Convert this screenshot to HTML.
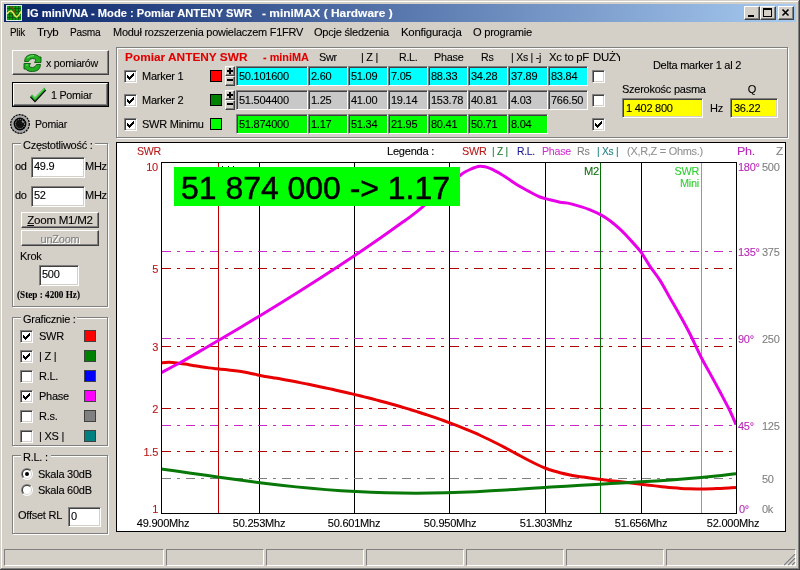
<!DOCTYPE html><html><head><meta charset="utf-8"><style>
html,body{margin:0;padding:0;width:800px;height:570px;overflow:hidden;background:#d4d0c8;font-family:'Liberation Sans',sans-serif;}
div{-webkit-text-stroke:0.1px currentColor;}
</style></head><body><div style="position:absolute;left:0;top:0;width:800px;height:570px;will-change:transform">
<div style="position:absolute;left:0px;top:0px;width:800px;height:570px;background:#d4d0c8;"></div>
<div style="position:absolute;left:1px;top:1px;width:797px;height:1px;background:#fff;"></div>
<div style="position:absolute;left:1px;top:1px;width:1px;height:567px;background:#fff;"></div>
<div style="position:absolute;left:0px;top:569px;width:800px;height:1px;background:#404040;"></div>
<div style="position:absolute;left:799px;top:0px;width:1px;height:570px;background:#404040;"></div>
<div style="position:absolute;left:1px;top:568px;width:798px;height:1px;background:#808080;"></div>
<div style="position:absolute;left:798px;top:1px;width:1px;height:568px;background:#808080;"></div>
<div style="position:absolute;left:4px;top:4px;width:792px;height:18px;background:linear-gradient(to right,#0a246a,#a6caf0);"></div>
<svg style="position:absolute;left:6px;top:5px" width="16" height="16">
<rect x="0" y="0" width="16" height="16" fill="#d8f0e8"/>
<rect x="1" y="1" width="14" height="14" fill="#109a10"/>
<g stroke="#0a4a0a" stroke-width="0.9" opacity="0.8">
<path d="M1 3.5H15M1 6.5H15M1 9.5H15M1 12.5H15M3.5 1V15M6.5 1V15M9.5 1V15M12.5 1V15"/></g>
<path d="M4 1.5 C6 2 7 3 8 5 C9 7 9.5 10 10 11" stroke="#705010" stroke-width="1.4" fill="none"/>
<path d="M1 9 C3 6 5 5 6.5 7 C8 9 9 12 10.5 12 C12 12 13.5 9 15 6.5" stroke="#e8e860" stroke-width="1.5" fill="none"/>
</svg>
<div style="position:absolute;left:27px;top:8px;font:bold 11px/11px 'Liberation Sans',sans-serif;letter-spacing:0px;color:#fff;white-space:nowrap;transform:scaleX(1.0132);transform-origin:left top;">IG miniVNA - Mode : Pomiar ANTENY SWR</div>
<div style="position:absolute;left:262.4px;top:8px;font:bold 11px/11px 'Liberation Sans',sans-serif;letter-spacing:0px;color:#fff;white-space:nowrap;transform:scaleX(1.0847);transform-origin:left top;">- miniMAX ( Hardware )</div>
<div style="position:absolute;left:744px;top:6px;width:14px;height:12px;background:#d4d0c8;border-top:1px solid #fff;border-left:1px solid #fff;border-right:1px solid #404040;border-bottom:1px solid #404040;box-shadow:inset -1px -1px 0 #808080;"></div>
<div style="position:absolute;left:748px;top:15px;width:6px;height:2px;background:#000;"></div>
<div style="position:absolute;left:760px;top:6px;width:14px;height:12px;background:#d4d0c8;border-top:1px solid #fff;border-left:1px solid #fff;border-right:1px solid #404040;border-bottom:1px solid #404040;box-shadow:inset -1px -1px 0 #808080;"></div>
<div style="position:absolute;left:763px;top:8px;width:7px;height:6px;border:1px solid #000;border-top-width:2px"></div>
<div style="position:absolute;left:778px;top:6px;width:14px;height:12px;background:#d4d0c8;border-top:1px solid #fff;border-left:1px solid #fff;border-right:1px solid #404040;border-bottom:1px solid #404040;box-shadow:inset -1px -1px 0 #808080;"></div>
<svg style="position:absolute;left:778px;top:6px" width="16" height="14"><path d="M4.5 3.5L10.5 9.5M10.5 3.5L4.5 9.5" stroke="#000" stroke-width="1.6"/></svg>
<div style="position:absolute;left:10px;top:27px;font:normal 11px/11px 'Liberation Sans',sans-serif;letter-spacing:-0.25px;color:#000;white-space:nowrap;transform:scaleX(0.8964);transform-origin:left top;">Plik</div>
<div style="position:absolute;left:37px;top:27px;font:normal 11px/11px 'Liberation Sans',sans-serif;letter-spacing:-0.25px;color:#000;white-space:nowrap;transform:scaleX(1.0440);transform-origin:left top;">Tryb</div>
<div style="position:absolute;left:70px;top:27px;font:normal 11px/11px 'Liberation Sans',sans-serif;letter-spacing:-0.25px;color:#000;white-space:nowrap;transform:scaleX(0.9242);transform-origin:left top;">Pasma</div>
<div style="position:absolute;left:113px;top:27px;font:normal 11px/11px 'Liberation Sans',sans-serif;letter-spacing:-0.25px;color:#000;white-space:nowrap;transform:scaleX(0.9962);transform-origin:left top;">Moduł rozszerzenia powielaczem F1FRV</div>
<div style="position:absolute;left:314px;top:27px;font:normal 11px/11px 'Liberation Sans',sans-serif;letter-spacing:-0.25px;color:#000;white-space:nowrap;transform:scaleX(1.0063);transform-origin:left top;">Opcje śledzenia</div>
<div style="position:absolute;left:401px;top:27px;font:normal 11px/11px 'Liberation Sans',sans-serif;letter-spacing:-0.25px;color:#000;white-space:nowrap;transform:scaleX(1.0403);transform-origin:left top;">Konfiguracja</div>
<div style="position:absolute;left:473px;top:27px;font:normal 11px/11px 'Liberation Sans',sans-serif;letter-spacing:-0.25px;color:#000;white-space:nowrap;transform:scaleX(1.0104);transform-origin:left top;">O programie</div>
<div style="position:absolute;left:12px;top:50px;width:95px;height:23px;background:#d4d0c8;border-top:1px solid #fff;border-left:1px solid #fff;border-right:1px solid #404040;border-bottom:1px solid #404040;box-shadow:inset -1px -1px 0 #808080;"></div>
<svg style="position:absolute;left:0;top:0" width="60" height="80">
<g fill="#22b022" stroke="#0a5a0a" stroke-width="0.9" stroke-linejoin="round">
<path d="M24.5 61.5 Q25 54.5 32.5 54.5 Q38 54.5 39 57 L41 57 L41 62.5 L34.5 62.5 L36 60 Q35 58.5 32.5 58.5 Q29.5 58.5 28.5 61.5 Z"/>
<path d="M40.5 64.5 Q40 71.5 32.5 71.5 Q27 71.5 26 69 L24 69 L24 63.5 L30.5 63.5 L29 66 Q30 67.5 32.5 67.5 Q35.5 67.5 36.5 64.5 Z"/>
</g>
<path d="M27 58 Q30 55.5 34 55.6" stroke="#7ee07e" stroke-width="1" fill="none"/>
<path d="M26 65 L28 65" stroke="#7ee07e" stroke-width="1" fill="none"/>
</svg>
<div style="position:absolute;left:46px;top:58px;font:normal 11px/11px 'Liberation Sans',sans-serif;letter-spacing:-0.25px;color:#000;white-space:nowrap;transform:scaleX(0.9674);transform-origin:left top;">x pomiarów</div>
<div style="position:absolute;left:12px;top:82px;width:97px;height:25px;background:#000;"></div>
<div style="position:absolute;left:13px;top:83px;width:93px;height:21px;background:#d4d0c8;border-top:1px solid #fff;border-left:1px solid #fff;border-right:1px solid #404040;border-bottom:1px solid #404040;box-shadow:inset -1px -1px 0 #808080;"></div>
<svg style="position:absolute;left:0;top:0" width="60" height="110">
<path d="M30.2 96.6 L35 101.6 L45.8 90.2 L44.4 87.6 L35 97.3 L32.2 94.4 Z" fill="#1eaa1e"/>
<path d="M30.4 96.8 L35 101.6 L45.8 90.2" stroke="#000" stroke-width="1.1" fill="none"/>
<path d="M32.5 95.5 L35 98.5 L44 89" stroke="#70e070" stroke-width="1" fill="none"/>
</svg>
<div style="position:absolute;left:51px;top:90px;font:normal 11px/11px 'Liberation Sans',sans-serif;letter-spacing:-0.25px;color:#000;white-space:nowrap;transform:scaleX(0.9755);transform-origin:left top;">1 Pomiar</div>
<svg style="position:absolute;left:10px;top:114px" width="20" height="20">
<circle cx="10" cy="10" r="9.3" fill="#a8a8a8" stroke="#000" stroke-width="1.2" stroke-dasharray="2.2 0.8"/>
<circle cx="10" cy="10" r="6.4" fill="#000"/>
<circle cx="10" cy="10" r="4.6" fill="#101010" stroke="#a0a0a0" stroke-width="0.9" stroke-dasharray="1.2 0.9"/>
<ellipse cx="12.8" cy="7.8" rx="1.3" ry="0.8" fill="#909090" transform="rotate(40 12.8 7.8)"/>
</svg>
<div style="position:absolute;left:35px;top:119px;font:normal 11px/11px 'Liberation Sans',sans-serif;letter-spacing:-0.25px;color:#000;white-space:nowrap;transform:scaleX(0.9597);transform-origin:left top;">Pomiar</div>
<div style="position:absolute;left:117px;top:48px;width:670px;height:89px;border:1px solid #fff;"></div>
<div style="position:absolute;left:116px;top:47px;width:670px;height:89px;border:1px solid #808080;"></div>
<div style="position:absolute;left:125px;top:52px;font:bold 11px/11px 'Liberation Sans',sans-serif;letter-spacing:0px;color:#e00000;white-space:nowrap;transform:scaleX(1.0775);transform-origin:left top;">Pomiar ANTENY SWR</div>
<div style="position:absolute;left:262.5px;top:52px;font:bold 11px/11px 'Liberation Sans',sans-serif;letter-spacing:0px;color:#e00000;white-space:nowrap;transform:scaleX(0.9902);transform-origin:left top;">- miniMA</div>
<div style="position:absolute;left:318.5px;top:52px;font:normal 11px/11px 'Liberation Sans',sans-serif;letter-spacing:-0.25px;color:#000;white-space:nowrap;transform:scaleX(0.9888);transform-origin:left top;">Swr</div>
<div style="position:absolute;left:360.5px;top:52px;font:normal 11px/11px 'Liberation Sans',sans-serif;letter-spacing:-0.25px;color:#000;white-space:nowrap;transform:scaleX(0.9828);transform-origin:left top;">| Z |</div>
<div style="position:absolute;left:398.5px;top:52px;font:normal 11px/11px 'Liberation Sans',sans-serif;letter-spacing:-0.25px;color:#000;white-space:nowrap;transform:scaleX(0.9642);transform-origin:left top;">R.L.</div>
<div style="position:absolute;left:433.5px;top:52px;font:normal 11px/11px 'Liberation Sans',sans-serif;letter-spacing:-0.25px;color:#000;white-space:nowrap;transform:scaleX(0.9849);transform-origin:left top;">Phase</div>
<div style="position:absolute;left:480.5px;top:52px;font:normal 11px/11px 'Liberation Sans',sans-serif;letter-spacing:-0.25px;color:#000;white-space:nowrap;transform:scaleX(0.9650);transform-origin:left top;">Rs</div>
<div style="position:absolute;left:511px;top:52px;font:normal 11px/11px 'Liberation Sans',sans-serif;letter-spacing:-0.25px;color:#000;white-space:nowrap;transform:scaleX(0.9500);transform-origin:left top;">| Xs | -j</div>
<div style="position:absolute;left:548.5px;top:52px;font:normal 11px/11px 'Liberation Sans',sans-serif;letter-spacing:-0.25px;color:#000;white-space:nowrap;transform:scaleX(1.0265);transform-origin:left top;">Xc to pF</div>
<div style="position:absolute;left:590px;top:48px;width:30px;height:16px;overflow:hidden">
<div style="position:absolute;left:2.5px;top:4px;font:normal 11px/11px 'Liberation Sans',sans-serif;letter-spacing:-0.25px;color:#000;white-space:nowrap;transform:scaleX(1.0362);transform-origin:left top;">DUŻY</div>
</div>
<div style="position:absolute;left:124px;top:70px;width:11px;height:11px;background:#fff;border-top:1px solid #808080;border-left:1px solid #808080;border-right:1px solid #fff;border-bottom:1px solid #fff;box-shadow:inset 1px 1px 0 #404040, inset -1px -1px 0 #d4d0c8;"></div>
<svg style="position:absolute;left:127px;top:73px" width="7" height="7" shape-rendering="crispEdges"><path d="M0 2h1v3h-1zM1 3h1v3h-1zM2 4h1v3h-1zM3 3h1v3h-1zM4 2h1v3h-1zM5 1h1v3h-1zM6 0h1v3h-1z" fill="#000"/></svg>
<div style="position:absolute;left:142px;top:71px;font:normal 11px/11px 'Liberation Sans',sans-serif;letter-spacing:-0.25px;color:#000;white-space:nowrap;">Marker 1</div>
<div style="position:absolute;left:210px;top:70px;width:10px;height:10px;background:#ff0000;border:1px solid #000;"></div>
<div style="position:absolute;left:225px;top:66px;width:8px;height:8px;background:#d4d0c8;border-top:1px solid #fff;border-left:1px solid #fff;border-right:1px solid #404040;border-bottom:1px solid #404040;box-shadow:inset -1px -1px 0 #808080;"></div>
<div style="position:absolute;left:225px;top:76px;width:8px;height:8px;background:#d4d0c8;border-top:1px solid #fff;border-left:1px solid #fff;border-right:1px solid #404040;border-bottom:1px solid #404040;box-shadow:inset -1px -1px 0 #808080;"></div>
<svg style="position:absolute;left:227px;top:68px" width="6" height="15" shape-rendering="crispEdges"><path d="M0 2h6v2h-6zM2 0h2v6h-2zM0 11h6v2h-6z" fill="#000"/></svg>
<div style="position:absolute;left:236px;top:66px;width:70px;height:18px;background:#00ffff;border-top:1px solid #808080;border-left:1px solid #808080;border-right:1px solid #fff;border-bottom:1px solid #fff;box-shadow:inset 1px 1px 0 #404040, inset -1px -1px 0 #00ffff;"></div>
<div style="position:absolute;left:239px;top:71px;font:normal 11px/11px 'Liberation Sans',sans-serif;letter-spacing:-0.25px;color:#000;white-space:nowrap;">50.101600</div>
<div style="position:absolute;left:308px;top:66px;width:38px;height:18px;background:#00ffff;border-top:1px solid #808080;border-left:1px solid #808080;border-right:1px solid #fff;border-bottom:1px solid #fff;box-shadow:inset 1px 1px 0 #404040, inset -1px -1px 0 #00ffff;"></div>
<div style="position:absolute;left:311px;top:71px;font:normal 11px/11px 'Liberation Sans',sans-serif;letter-spacing:-0.25px;color:#000;white-space:nowrap;">2.60</div>
<div style="position:absolute;left:348px;top:66px;width:38px;height:18px;background:#00ffff;border-top:1px solid #808080;border-left:1px solid #808080;border-right:1px solid #fff;border-bottom:1px solid #fff;box-shadow:inset 1px 1px 0 #404040, inset -1px -1px 0 #00ffff;"></div>
<div style="position:absolute;left:351px;top:71px;font:normal 11px/11px 'Liberation Sans',sans-serif;letter-spacing:-0.25px;color:#000;white-space:nowrap;">51.09</div>
<div style="position:absolute;left:388px;top:66px;width:38px;height:18px;background:#00ffff;border-top:1px solid #808080;border-left:1px solid #808080;border-right:1px solid #fff;border-bottom:1px solid #fff;box-shadow:inset 1px 1px 0 #404040, inset -1px -1px 0 #00ffff;"></div>
<div style="position:absolute;left:391px;top:71px;font:normal 11px/11px 'Liberation Sans',sans-serif;letter-spacing:-0.25px;color:#000;white-space:nowrap;">7.05</div>
<div style="position:absolute;left:428px;top:66px;width:38px;height:18px;background:#00ffff;border-top:1px solid #808080;border-left:1px solid #808080;border-right:1px solid #fff;border-bottom:1px solid #fff;box-shadow:inset 1px 1px 0 #404040, inset -1px -1px 0 #00ffff;"></div>
<div style="position:absolute;left:431px;top:71px;font:normal 11px/11px 'Liberation Sans',sans-serif;letter-spacing:-0.25px;color:#000;white-space:nowrap;">88.33</div>
<div style="position:absolute;left:468px;top:66px;width:38px;height:18px;background:#00ffff;border-top:1px solid #808080;border-left:1px solid #808080;border-right:1px solid #fff;border-bottom:1px solid #fff;box-shadow:inset 1px 1px 0 #404040, inset -1px -1px 0 #00ffff;"></div>
<div style="position:absolute;left:471px;top:71px;font:normal 11px/11px 'Liberation Sans',sans-serif;letter-spacing:-0.25px;color:#000;white-space:nowrap;">34.28</div>
<div style="position:absolute;left:508px;top:66px;width:38px;height:18px;background:#00ffff;border-top:1px solid #808080;border-left:1px solid #808080;border-right:1px solid #fff;border-bottom:1px solid #fff;box-shadow:inset 1px 1px 0 #404040, inset -1px -1px 0 #00ffff;"></div>
<div style="position:absolute;left:511px;top:71px;font:normal 11px/11px 'Liberation Sans',sans-serif;letter-spacing:-0.25px;color:#000;white-space:nowrap;">37.89</div>
<div style="position:absolute;left:548px;top:66px;width:38px;height:18px;background:#00ffff;border-top:1px solid #808080;border-left:1px solid #808080;border-right:1px solid #fff;border-bottom:1px solid #fff;box-shadow:inset 1px 1px 0 #404040, inset -1px -1px 0 #00ffff;"></div>
<div style="position:absolute;left:551px;top:71px;font:normal 11px/11px 'Liberation Sans',sans-serif;letter-spacing:-0.25px;color:#000;white-space:nowrap;">83.84</div>
<div style="position:absolute;left:592px;top:70px;width:11px;height:11px;background:#fff;border-top:1px solid #808080;border-left:1px solid #808080;border-right:1px solid #fff;border-bottom:1px solid #fff;box-shadow:inset 1px 1px 0 #404040, inset -1px -1px 0 #d4d0c8;"></div>
<div style="position:absolute;left:124px;top:94px;width:11px;height:11px;background:#fff;border-top:1px solid #808080;border-left:1px solid #808080;border-right:1px solid #fff;border-bottom:1px solid #fff;box-shadow:inset 1px 1px 0 #404040, inset -1px -1px 0 #d4d0c8;"></div>
<svg style="position:absolute;left:127px;top:97px" width="7" height="7" shape-rendering="crispEdges"><path d="M0 2h1v3h-1zM1 3h1v3h-1zM2 4h1v3h-1zM3 3h1v3h-1zM4 2h1v3h-1zM5 1h1v3h-1zM6 0h1v3h-1z" fill="#000"/></svg>
<div style="position:absolute;left:142px;top:95px;font:normal 11px/11px 'Liberation Sans',sans-serif;letter-spacing:-0.25px;color:#000;white-space:nowrap;">Marker 2</div>
<div style="position:absolute;left:210px;top:94px;width:10px;height:10px;background:#008000;border:1px solid #000;"></div>
<div style="position:absolute;left:225px;top:90px;width:8px;height:8px;background:#d4d0c8;border-top:1px solid #fff;border-left:1px solid #fff;border-right:1px solid #404040;border-bottom:1px solid #404040;box-shadow:inset -1px -1px 0 #808080;"></div>
<div style="position:absolute;left:225px;top:100px;width:8px;height:8px;background:#d4d0c8;border-top:1px solid #fff;border-left:1px solid #fff;border-right:1px solid #404040;border-bottom:1px solid #404040;box-shadow:inset -1px -1px 0 #808080;"></div>
<svg style="position:absolute;left:227px;top:92px" width="6" height="15" shape-rendering="crispEdges"><path d="M0 2h6v2h-6zM2 0h2v6h-2zM0 11h6v2h-6z" fill="#000"/></svg>
<div style="position:absolute;left:236px;top:90px;width:70px;height:18px;background:#c8c8c8;border-top:1px solid #808080;border-left:1px solid #808080;border-right:1px solid #fff;border-bottom:1px solid #fff;box-shadow:inset 1px 1px 0 #404040, inset -1px -1px 0 #c8c8c8;"></div>
<div style="position:absolute;left:239px;top:95px;font:normal 11px/11px 'Liberation Sans',sans-serif;letter-spacing:-0.25px;color:#000;white-space:nowrap;">51.504400</div>
<div style="position:absolute;left:308px;top:90px;width:38px;height:18px;background:#c8c8c8;border-top:1px solid #808080;border-left:1px solid #808080;border-right:1px solid #fff;border-bottom:1px solid #fff;box-shadow:inset 1px 1px 0 #404040, inset -1px -1px 0 #c8c8c8;"></div>
<div style="position:absolute;left:311px;top:95px;font:normal 11px/11px 'Liberation Sans',sans-serif;letter-spacing:-0.25px;color:#000;white-space:nowrap;">1.25</div>
<div style="position:absolute;left:348px;top:90px;width:38px;height:18px;background:#c8c8c8;border-top:1px solid #808080;border-left:1px solid #808080;border-right:1px solid #fff;border-bottom:1px solid #fff;box-shadow:inset 1px 1px 0 #404040, inset -1px -1px 0 #c8c8c8;"></div>
<div style="position:absolute;left:351px;top:95px;font:normal 11px/11px 'Liberation Sans',sans-serif;letter-spacing:-0.25px;color:#000;white-space:nowrap;">41.00</div>
<div style="position:absolute;left:388px;top:90px;width:38px;height:18px;background:#c8c8c8;border-top:1px solid #808080;border-left:1px solid #808080;border-right:1px solid #fff;border-bottom:1px solid #fff;box-shadow:inset 1px 1px 0 #404040, inset -1px -1px 0 #c8c8c8;"></div>
<div style="position:absolute;left:391px;top:95px;font:normal 11px/11px 'Liberation Sans',sans-serif;letter-spacing:-0.25px;color:#000;white-space:nowrap;">19.14</div>
<div style="position:absolute;left:428px;top:90px;width:38px;height:18px;background:#c8c8c8;border-top:1px solid #808080;border-left:1px solid #808080;border-right:1px solid #fff;border-bottom:1px solid #fff;box-shadow:inset 1px 1px 0 #404040, inset -1px -1px 0 #c8c8c8;"></div>
<div style="position:absolute;left:431px;top:95px;font:normal 11px/11px 'Liberation Sans',sans-serif;letter-spacing:-0.25px;color:#000;white-space:nowrap;">153.78</div>
<div style="position:absolute;left:468px;top:90px;width:38px;height:18px;background:#c8c8c8;border-top:1px solid #808080;border-left:1px solid #808080;border-right:1px solid #fff;border-bottom:1px solid #fff;box-shadow:inset 1px 1px 0 #404040, inset -1px -1px 0 #c8c8c8;"></div>
<div style="position:absolute;left:471px;top:95px;font:normal 11px/11px 'Liberation Sans',sans-serif;letter-spacing:-0.25px;color:#000;white-space:nowrap;">40.81</div>
<div style="position:absolute;left:508px;top:90px;width:38px;height:18px;background:#c8c8c8;border-top:1px solid #808080;border-left:1px solid #808080;border-right:1px solid #fff;border-bottom:1px solid #fff;box-shadow:inset 1px 1px 0 #404040, inset -1px -1px 0 #c8c8c8;"></div>
<div style="position:absolute;left:511px;top:95px;font:normal 11px/11px 'Liberation Sans',sans-serif;letter-spacing:-0.25px;color:#000;white-space:nowrap;">4.03</div>
<div style="position:absolute;left:548px;top:90px;width:38px;height:18px;background:#c8c8c8;border-top:1px solid #808080;border-left:1px solid #808080;border-right:1px solid #fff;border-bottom:1px solid #fff;box-shadow:inset 1px 1px 0 #404040, inset -1px -1px 0 #c8c8c8;"></div>
<div style="position:absolute;left:551px;top:95px;font:normal 11px/11px 'Liberation Sans',sans-serif;letter-spacing:-0.25px;color:#000;white-space:nowrap;">766.50</div>
<div style="position:absolute;left:592px;top:94px;width:11px;height:11px;background:#fff;border-top:1px solid #808080;border-left:1px solid #808080;border-right:1px solid #fff;border-bottom:1px solid #fff;box-shadow:inset 1px 1px 0 #404040, inset -1px -1px 0 #d4d0c8;"></div>
<div style="position:absolute;left:124px;top:118px;width:11px;height:11px;background:#fff;border-top:1px solid #808080;border-left:1px solid #808080;border-right:1px solid #fff;border-bottom:1px solid #fff;box-shadow:inset 1px 1px 0 #404040, inset -1px -1px 0 #d4d0c8;"></div>
<svg style="position:absolute;left:127px;top:121px" width="7" height="7" shape-rendering="crispEdges"><path d="M0 2h1v3h-1zM1 3h1v3h-1zM2 4h1v3h-1zM3 3h1v3h-1zM4 2h1v3h-1zM5 1h1v3h-1zM6 0h1v3h-1z" fill="#000"/></svg>
<div style="position:absolute;left:142px;top:119px;font:normal 11px/11px 'Liberation Sans',sans-serif;letter-spacing:-0.25px;color:#000;white-space:nowrap;">SWR Minimu</div>
<div style="position:absolute;left:210px;top:118px;width:10px;height:10px;background:#00ff00;border:1px solid #000;"></div>
<div style="position:absolute;left:236px;top:114px;width:70px;height:18px;background:#00ff00;border-top:1px solid #808080;border-left:1px solid #808080;border-right:1px solid #fff;border-bottom:1px solid #fff;box-shadow:inset 1px 1px 0 #404040, inset -1px -1px 0 #00ff00;"></div>
<div style="position:absolute;left:239px;top:119px;font:normal 11px/11px 'Liberation Sans',sans-serif;letter-spacing:-0.25px;color:#000;white-space:nowrap;">51.874000</div>
<div style="position:absolute;left:308px;top:114px;width:38px;height:18px;background:#00ff00;border-top:1px solid #808080;border-left:1px solid #808080;border-right:1px solid #fff;border-bottom:1px solid #fff;box-shadow:inset 1px 1px 0 #404040, inset -1px -1px 0 #00ff00;"></div>
<div style="position:absolute;left:311px;top:119px;font:normal 11px/11px 'Liberation Sans',sans-serif;letter-spacing:-0.25px;color:#000;white-space:nowrap;">1.17</div>
<div style="position:absolute;left:348px;top:114px;width:38px;height:18px;background:#00ff00;border-top:1px solid #808080;border-left:1px solid #808080;border-right:1px solid #fff;border-bottom:1px solid #fff;box-shadow:inset 1px 1px 0 #404040, inset -1px -1px 0 #00ff00;"></div>
<div style="position:absolute;left:351px;top:119px;font:normal 11px/11px 'Liberation Sans',sans-serif;letter-spacing:-0.25px;color:#000;white-space:nowrap;">51.34</div>
<div style="position:absolute;left:388px;top:114px;width:38px;height:18px;background:#00ff00;border-top:1px solid #808080;border-left:1px solid #808080;border-right:1px solid #fff;border-bottom:1px solid #fff;box-shadow:inset 1px 1px 0 #404040, inset -1px -1px 0 #00ff00;"></div>
<div style="position:absolute;left:391px;top:119px;font:normal 11px/11px 'Liberation Sans',sans-serif;letter-spacing:-0.25px;color:#000;white-space:nowrap;">21.95</div>
<div style="position:absolute;left:428px;top:114px;width:38px;height:18px;background:#00ff00;border-top:1px solid #808080;border-left:1px solid #808080;border-right:1px solid #fff;border-bottom:1px solid #fff;box-shadow:inset 1px 1px 0 #404040, inset -1px -1px 0 #00ff00;"></div>
<div style="position:absolute;left:431px;top:119px;font:normal 11px/11px 'Liberation Sans',sans-serif;letter-spacing:-0.25px;color:#000;white-space:nowrap;">80.41</div>
<div style="position:absolute;left:468px;top:114px;width:38px;height:18px;background:#00ff00;border-top:1px solid #808080;border-left:1px solid #808080;border-right:1px solid #fff;border-bottom:1px solid #fff;box-shadow:inset 1px 1px 0 #404040, inset -1px -1px 0 #00ff00;"></div>
<div style="position:absolute;left:471px;top:119px;font:normal 11px/11px 'Liberation Sans',sans-serif;letter-spacing:-0.25px;color:#000;white-space:nowrap;">50.71</div>
<div style="position:absolute;left:508px;top:114px;width:38px;height:18px;background:#00ff00;border-top:1px solid #808080;border-left:1px solid #808080;border-right:1px solid #fff;border-bottom:1px solid #fff;box-shadow:inset 1px 1px 0 #404040, inset -1px -1px 0 #00ff00;"></div>
<div style="position:absolute;left:511px;top:119px;font:normal 11px/11px 'Liberation Sans',sans-serif;letter-spacing:-0.25px;color:#000;white-space:nowrap;">8.04</div>
<div style="position:absolute;left:592px;top:118px;width:11px;height:11px;background:#fff;border-top:1px solid #808080;border-left:1px solid #808080;border-right:1px solid #fff;border-bottom:1px solid #fff;box-shadow:inset 1px 1px 0 #404040, inset -1px -1px 0 #d4d0c8;"></div>
<svg style="position:absolute;left:595px;top:121px" width="7" height="7" shape-rendering="crispEdges"><path d="M0 2h1v3h-1zM1 3h1v3h-1zM2 4h1v3h-1zM3 3h1v3h-1zM4 2h1v3h-1zM5 1h1v3h-1zM6 0h1v3h-1z" fill="#000"/></svg>
<div style="position:absolute;left:697px;top:60px;font:normal 11px/11px 'Liberation Sans',sans-serif;letter-spacing:-0.25px;color:#000;white-space:nowrap;transform:translateX(-50%) ;transform-origin:center top;">Delta marker 1 al 2</div>
<div style="position:absolute;left:622px;top:84px;font:normal 11px/11px 'Liberation Sans',sans-serif;letter-spacing:-0.25px;color:#000;white-space:nowrap;">Szerokośc pasma</div>
<div style="position:absolute;left:752px;top:84px;font:normal 11px/11px 'Liberation Sans',sans-serif;letter-spacing:-0.25px;color:#000;white-space:nowrap;transform:translateX(-50%) ;transform-origin:center top;">Q</div>
<div style="position:absolute;left:622px;top:98px;width:79px;height:18px;background:#ffff00;border-top:1px solid #808080;border-left:1px solid #808080;border-right:1px solid #fff;border-bottom:1px solid #fff;box-shadow:inset 1px 1px 0 #404040, inset -1px -1px 0 #d4d0c8;"></div>
<div style="position:absolute;left:626px;top:103px;font:normal 11px/11px 'Liberation Sans',sans-serif;letter-spacing:-0.25px;color:#000;white-space:nowrap;">1 402 800</div>
<div style="position:absolute;left:710px;top:103px;font:normal 11px/11px 'Liberation Sans',sans-serif;letter-spacing:-0.25px;color:#000;white-space:nowrap;">Hz</div>
<div style="position:absolute;left:730px;top:98px;width:46px;height:18px;background:#ffff00;border-top:1px solid #808080;border-left:1px solid #808080;border-right:1px solid #fff;border-bottom:1px solid #fff;box-shadow:inset 1px 1px 0 #404040, inset -1px -1px 0 #d4d0c8;"></div>
<div style="position:absolute;left:734px;top:103px;font:normal 11px/11px 'Liberation Sans',sans-serif;letter-spacing:-0.25px;color:#000;white-space:nowrap;">36.22</div>
<div style="position:absolute;left:13px;top:144px;width:94px;height:162px;border:1px solid #fff;"></div>
<div style="position:absolute;left:12px;top:143px;width:94px;height:162px;border:1px solid #808080;"></div>
<div style="position:absolute;left:21px;top:141px;width:74px;height:6px;background:#d4d0c8;"></div>
<div style="position:absolute;left:23px;top:140px;font:normal 11px/11px 'Liberation Sans',sans-serif;letter-spacing:-0.25px;color:#000;white-space:nowrap;">Częstotliwość :</div>
<div style="position:absolute;left:15px;top:161px;font:normal 11px/11px 'Liberation Sans',sans-serif;letter-spacing:-0.25px;color:#000;white-space:nowrap;">od</div>
<div style="position:absolute;left:31px;top:157px;width:52px;height:19px;background:#fff;border-top:1px solid #808080;border-left:1px solid #808080;border-right:1px solid #fff;border-bottom:1px solid #fff;box-shadow:inset 1px 1px 0 #404040, inset -1px -1px 0 #d4d0c8;"></div>
<div style="position:absolute;left:34px;top:161px;font:normal 11px/11px 'Liberation Sans',sans-serif;letter-spacing:-0.25px;color:#000;white-space:nowrap;">49.9</div>
<div style="position:absolute;left:85px;top:161px;font:normal 11px/11px 'Liberation Sans',sans-serif;letter-spacing:-0.25px;color:#000;white-space:nowrap;">MHz</div>
<div style="position:absolute;left:15px;top:190px;font:normal 11px/11px 'Liberation Sans',sans-serif;letter-spacing:-0.25px;color:#000;white-space:nowrap;">do</div>
<div style="position:absolute;left:31px;top:186px;width:52px;height:19px;background:#fff;border-top:1px solid #808080;border-left:1px solid #808080;border-right:1px solid #fff;border-bottom:1px solid #fff;box-shadow:inset 1px 1px 0 #404040, inset -1px -1px 0 #d4d0c8;"></div>
<div style="position:absolute;left:34px;top:190px;font:normal 11px/11px 'Liberation Sans',sans-serif;letter-spacing:-0.25px;color:#000;white-space:nowrap;">52</div>
<div style="position:absolute;left:85px;top:190px;font:normal 11px/11px 'Liberation Sans',sans-serif;letter-spacing:-0.25px;color:#000;white-space:nowrap;">MHz</div>
<div style="position:absolute;left:21px;top:212px;width:76px;height:14px;background:#d4d0c8;border-top:1px solid #fff;border-left:1px solid #fff;border-right:1px solid #404040;border-bottom:1px solid #404040;box-shadow:inset -1px -1px 0 #808080;"></div>
<div style="position:absolute;left:60px;top:215px;font:normal 11px/11px 'Liberation Sans',sans-serif;letter-spacing:-0.25px;color:#000;white-space:nowrap;transform:translateX(-50%) scaleX(1.0512);transform-origin:center top;"><u>Z</u>oom M1/M2</div>
<div style="position:absolute;left:21px;top:230px;width:76px;height:14px;background:#d4d0c8;border-top:1px solid #fff;border-left:1px solid #fff;border-right:1px solid #404040;border-bottom:1px solid #404040;box-shadow:inset -1px -1px 0 #808080;"></div>
<div style="position:absolute;left:61px;top:235px;font:normal 11px/11px 'Liberation Sans',sans-serif;letter-spacing:-0.25px;color:#fff;white-space:nowrap;transform:translateX(-50%) ;transform-origin:center top;">unZoom</div>
<div style="position:absolute;left:60px;top:234px;font:normal 11px/11px 'Liberation Sans',sans-serif;letter-spacing:-0.25px;color:#808080;white-space:nowrap;transform:translateX(-50%) ;transform-origin:center top;">unZoom</div>
<div style="position:absolute;left:20px;top:251px;font:normal 11px/11px 'Liberation Sans',sans-serif;letter-spacing:-0.25px;color:#000;white-space:nowrap;">Krok</div>
<div style="position:absolute;left:39px;top:265px;width:38px;height:19px;background:#fff;border-top:1px solid #808080;border-left:1px solid #808080;border-right:1px solid #fff;border-bottom:1px solid #fff;box-shadow:inset 1px 1px 0 #404040, inset -1px -1px 0 #d4d0c8;"></div>
<div style="position:absolute;left:42px;top:269px;font:normal 11px/11px 'Liberation Sans',sans-serif;letter-spacing:-0.25px;color:#000;white-space:nowrap;">500</div>
<div style="position:absolute;left:17px;top:290px;font:bold 10px/10px 'Liberation Serif',serif;letter-spacing:0px;color:#000;white-space:nowrap;transform:scaleX(0.9182);transform-origin:left top;">(Step : 4200 Hz)</div>
<div style="position:absolute;left:13px;top:318px;width:94px;height:127px;border:1px solid #fff;"></div>
<div style="position:absolute;left:12px;top:317px;width:94px;height:127px;border:1px solid #808080;"></div>
<div style="position:absolute;left:21px;top:315px;width:56px;height:6px;background:#d4d0c8;"></div>
<div style="position:absolute;left:23px;top:314px;font:normal 11px/11px 'Liberation Sans',sans-serif;letter-spacing:-0.25px;color:#000;white-space:nowrap;">Graficznie :</div>
<div style="position:absolute;left:20px;top:330px;width:11px;height:11px;background:#fff;border-top:1px solid #808080;border-left:1px solid #808080;border-right:1px solid #fff;border-bottom:1px solid #fff;box-shadow:inset 1px 1px 0 #404040, inset -1px -1px 0 #d4d0c8;"></div>
<svg style="position:absolute;left:23px;top:333px" width="7" height="7" shape-rendering="crispEdges"><path d="M0 2h1v3h-1zM1 3h1v3h-1zM2 4h1v3h-1zM3 3h1v3h-1zM4 2h1v3h-1zM5 1h1v3h-1zM6 0h1v3h-1z" fill="#000"/></svg>
<div style="position:absolute;left:39px;top:331px;font:normal 11px/11px 'Liberation Sans',sans-serif;letter-spacing:-0.25px;color:#000;white-space:nowrap;">SWR</div>
<div style="position:absolute;left:84px;top:330px;width:10px;height:10px;background:#ff0000;border:1px solid #404040;"></div>
<div style="position:absolute;left:20px;top:350px;width:11px;height:11px;background:#fff;border-top:1px solid #808080;border-left:1px solid #808080;border-right:1px solid #fff;border-bottom:1px solid #fff;box-shadow:inset 1px 1px 0 #404040, inset -1px -1px 0 #d4d0c8;"></div>
<svg style="position:absolute;left:23px;top:353px" width="7" height="7" shape-rendering="crispEdges"><path d="M0 2h1v3h-1zM1 3h1v3h-1zM2 4h1v3h-1zM3 3h1v3h-1zM4 2h1v3h-1zM5 1h1v3h-1zM6 0h1v3h-1z" fill="#000"/></svg>
<div style="position:absolute;left:39px;top:351px;font:normal 11px/11px 'Liberation Sans',sans-serif;letter-spacing:-0.25px;color:#000;white-space:nowrap;">| Z |</div>
<div style="position:absolute;left:84px;top:350px;width:10px;height:10px;background:#008000;border:1px solid #404040;"></div>
<div style="position:absolute;left:20px;top:370px;width:11px;height:11px;background:#fff;border-top:1px solid #808080;border-left:1px solid #808080;border-right:1px solid #fff;border-bottom:1px solid #fff;box-shadow:inset 1px 1px 0 #404040, inset -1px -1px 0 #d4d0c8;"></div>
<div style="position:absolute;left:39px;top:371px;font:normal 11px/11px 'Liberation Sans',sans-serif;letter-spacing:-0.25px;color:#000;white-space:nowrap;">R.L.</div>
<div style="position:absolute;left:84px;top:370px;width:10px;height:10px;background:#0000ff;border:1px solid #404040;"></div>
<div style="position:absolute;left:20px;top:390px;width:11px;height:11px;background:#fff;border-top:1px solid #808080;border-left:1px solid #808080;border-right:1px solid #fff;border-bottom:1px solid #fff;box-shadow:inset 1px 1px 0 #404040, inset -1px -1px 0 #d4d0c8;"></div>
<svg style="position:absolute;left:23px;top:393px" width="7" height="7" shape-rendering="crispEdges"><path d="M0 2h1v3h-1zM1 3h1v3h-1zM2 4h1v3h-1zM3 3h1v3h-1zM4 2h1v3h-1zM5 1h1v3h-1zM6 0h1v3h-1z" fill="#000"/></svg>
<div style="position:absolute;left:39px;top:391px;font:normal 11px/11px 'Liberation Sans',sans-serif;letter-spacing:-0.25px;color:#000;white-space:nowrap;">Phase</div>
<div style="position:absolute;left:84px;top:390px;width:10px;height:10px;background:#ff00ff;border:1px solid #404040;"></div>
<div style="position:absolute;left:20px;top:410px;width:11px;height:11px;background:#fff;border-top:1px solid #808080;border-left:1px solid #808080;border-right:1px solid #fff;border-bottom:1px solid #fff;box-shadow:inset 1px 1px 0 #404040, inset -1px -1px 0 #d4d0c8;"></div>
<div style="position:absolute;left:39px;top:411px;font:normal 11px/11px 'Liberation Sans',sans-serif;letter-spacing:-0.25px;color:#000;white-space:nowrap;">R.s.</div>
<div style="position:absolute;left:84px;top:410px;width:10px;height:10px;background:#808080;border:1px solid #404040;"></div>
<div style="position:absolute;left:20px;top:430px;width:11px;height:11px;background:#fff;border-top:1px solid #808080;border-left:1px solid #808080;border-right:1px solid #fff;border-bottom:1px solid #fff;box-shadow:inset 1px 1px 0 #404040, inset -1px -1px 0 #d4d0c8;"></div>
<div style="position:absolute;left:39px;top:431px;font:normal 11px/11px 'Liberation Sans',sans-serif;letter-spacing:-0.25px;color:#000;white-space:nowrap;">| XS |</div>
<div style="position:absolute;left:84px;top:430px;width:10px;height:10px;background:#008080;border:1px solid #404040;"></div>
<div style="position:absolute;left:13px;top:456px;width:94px;height:77px;border:1px solid #fff;"></div>
<div style="position:absolute;left:12px;top:455px;width:94px;height:77px;border:1px solid #808080;"></div>
<div style="position:absolute;left:21px;top:453px;width:30px;height:6px;background:#d4d0c8;"></div>
<div style="position:absolute;left:23px;top:452px;font:normal 11px/11px 'Liberation Sans',sans-serif;letter-spacing:-0.25px;color:#000;white-space:nowrap;">R.L. :</div>
<svg style="position:absolute;left:21px;top:468px" width="12" height="12">
<defs><clipPath id="tl21468"><path d="M0 0H12L0 12Z"/></clipPath><clipPath id="br21468"><path d="M12 0V12H0Z"/></clipPath></defs>
<circle cx="6" cy="6" r="6" fill="#808080" clip-path="url(#tl21468)"/>
<circle cx="6" cy="6" r="6" fill="#fff" clip-path="url(#br21468)"/>
<circle cx="6" cy="6" r="5" fill="#404040" clip-path="url(#tl21468)"/>
<circle cx="6" cy="6" r="5" fill="#d4d0c8" clip-path="url(#br21468)"/>
<circle cx="6" cy="6" r="4" fill="#fff"/>
<circle cx="6" cy="6" r="2" fill="#000"/>
</svg>
<div style="position:absolute;left:38px;top:469px;font:normal 11px/11px 'Liberation Sans',sans-serif;letter-spacing:-0.25px;color:#000;white-space:nowrap;">Skala 30dB</div>
<svg style="position:absolute;left:21px;top:484px" width="12" height="12">
<defs><clipPath id="tl21484"><path d="M0 0H12L0 12Z"/></clipPath><clipPath id="br21484"><path d="M12 0V12H0Z"/></clipPath></defs>
<circle cx="6" cy="6" r="6" fill="#808080" clip-path="url(#tl21484)"/>
<circle cx="6" cy="6" r="6" fill="#fff" clip-path="url(#br21484)"/>
<circle cx="6" cy="6" r="5" fill="#404040" clip-path="url(#tl21484)"/>
<circle cx="6" cy="6" r="5" fill="#d4d0c8" clip-path="url(#br21484)"/>
<circle cx="6" cy="6" r="4" fill="#fff"/>

</svg>
<div style="position:absolute;left:38px;top:485px;font:normal 11px/11px 'Liberation Sans',sans-serif;letter-spacing:-0.25px;color:#000;white-space:nowrap;">Skala 60dB</div>
<div style="position:absolute;left:18px;top:510px;font:normal 11px/11px 'Liberation Sans',sans-serif;letter-spacing:-0.25px;color:#000;white-space:nowrap;">Offset RL</div>
<div style="position:absolute;left:68px;top:507px;width:31px;height:18px;background:#fff;border-top:1px solid #808080;border-left:1px solid #808080;border-right:1px solid #fff;border-bottom:1px solid #fff;box-shadow:inset 1px 1px 0 #404040, inset -1px -1px 0 #d4d0c8;"></div>
<div style="position:absolute;left:71px;top:511px;font:normal 11px/11px 'Liberation Sans',sans-serif;letter-spacing:-0.25px;color:#000;white-space:nowrap;">0</div>
<div style="position:absolute;left:4px;top:549px;width:158px;height:15px;border-top:1px solid #808080;border-left:1px solid #808080;border-right:1px solid #fff;border-bottom:1px solid #fff;"></div>
<div style="position:absolute;left:166px;top:549px;width:96px;height:15px;border-top:1px solid #808080;border-left:1px solid #808080;border-right:1px solid #fff;border-bottom:1px solid #fff;"></div>
<div style="position:absolute;left:266px;top:549px;width:96px;height:15px;border-top:1px solid #808080;border-left:1px solid #808080;border-right:1px solid #fff;border-bottom:1px solid #fff;"></div>
<div style="position:absolute;left:366px;top:549px;width:96px;height:15px;border-top:1px solid #808080;border-left:1px solid #808080;border-right:1px solid #fff;border-bottom:1px solid #fff;"></div>
<div style="position:absolute;left:466px;top:549px;width:96px;height:15px;border-top:1px solid #808080;border-left:1px solid #808080;border-right:1px solid #fff;border-bottom:1px solid #fff;"></div>
<div style="position:absolute;left:566px;top:549px;width:96px;height:15px;border-top:1px solid #808080;border-left:1px solid #808080;border-right:1px solid #fff;border-bottom:1px solid #fff;"></div>
<div style="position:absolute;left:666px;top:549px;width:128px;height:15px;border-top:1px solid #808080;border-left:1px solid #808080;border-right:1px solid #fff;border-bottom:1px solid #fff;"></div>
<svg style="position:absolute;left:782px;top:552px" width="14" height="14">
<path d="M13 1L1 13M13 5L5 13M13 9L9 13" stroke="#fff" stroke-width="1"/>
<path d="M13 2L2 13M13 6L6 13M13 10L10 13" stroke="#808080" stroke-width="1.4"/>
</svg>
<div style="position:absolute;left:116px;top:142px;width:668px;height:388px;background:#fff;border:1px solid #000;"></div>
<svg style="position:absolute;left:0;top:0" width="800" height="570">
<defs><clipPath id="pc"><rect x="161" y="162" width="576" height="352"/></clipPath></defs>
<rect x="259" y="162" width="1" height="351" fill="#000"/>
<rect x="354" y="162" width="1" height="351" fill="#000"/>
<rect x="449" y="162" width="1" height="351" fill="#000"/>
<rect x="545" y="162" width="1" height="351" fill="#000"/>
<rect x="641" y="162" width="1" height="351" fill="#000"/>
<line x1="162" y1="268.5" x2="736" y2="268.5" stroke="#b00000" stroke-width="1" stroke-dasharray="9 6 3 6"/>
<line x1="162" y1="346.5" x2="736" y2="346.5" stroke="#b00000" stroke-width="1" stroke-dasharray="9 6 3 6"/>
<line x1="162" y1="408.5" x2="736" y2="408.5" stroke="#b00000" stroke-width="1" stroke-dasharray="9 6 3 6"/>
<line x1="162" y1="451.5" x2="736" y2="451.5" stroke="#b00000" stroke-width="1" stroke-dasharray="9 6 3 6"/>
<line x1="162" y1="251.5" x2="736" y2="251.5" stroke="#c828c8" stroke-width="1" stroke-dasharray="9 6 3 6"/>
<line x1="162" y1="338.5" x2="736" y2="338.5" stroke="#c828c8" stroke-width="1" stroke-dasharray="9 6 3 6"/>
<line x1="162" y1="425.5" x2="736" y2="425.5" stroke="#c828c8" stroke-width="1" stroke-dasharray="9 6 3 6"/>
<line x1="162" y1="478.5" x2="736" y2="478.5" stroke="#808080" stroke-width="1" stroke-dasharray="9 6 3 6"/>
<rect x="218" y="162" width="1" height="351" fill="#c00000"/>
<rect x="600" y="162" width="1" height="351" fill="#007000"/>
<rect x="701" y="162" width="1" height="351" fill="#30e030"/>
<g clip-path="url(#pc)" fill="none" stroke-width="3" stroke-linejoin="round" stroke-linecap="butt">
<path d="M161 362.75 C162.33 362.69 166.33 362.34 169 362.37 C171.67 362.40 174.33 362.63 177 362.91 C179.67 363.19 182.33 363.62 185 364.04 C187.67 364.46 190.33 364.98 193 365.44 C195.67 365.90 198.33 366.38 201 366.79 C203.67 367.20 206.33 367.55 209 367.88 C211.67 368.21 214.33 368.49 217 368.78 C219.67 369.07 222.33 369.32 225 369.61 C227.67 369.90 230.33 370.17 233 370.5 C235.67 370.83 238.33 371.16 241 371.57 C243.67 371.98 246.33 372.42 249 372.95 C251.67 373.48 254.33 374.18 257 374.76 C259.67 375.34 262.33 375.96 265 376.46 C267.67 376.95 270.33 377.30 273 377.73 C275.67 378.16 278.33 378.57 281 379.03 C283.67 379.49 286.33 379.98 289 380.48 C291.67 380.98 294.33 381.50 297 382.02 C299.67 382.54 302.33 383.08 305 383.62 C307.67 384.16 310.33 384.71 313 385.26 C315.67 385.81 318.33 386.37 321 386.93 C323.67 387.50 326.33 388.07 329 388.65 C331.67 389.23 334.33 389.82 337 390.42 C339.67 391.02 342.33 391.62 345 392.23 C347.67 392.85 350.33 393.47 353 394.11 C355.67 394.75 358.33 395.39 361 396.05 C363.67 396.71 366.33 397.37 369 398.05 C371.67 398.73 374.33 399.42 377 400.12 C379.67 400.82 382.33 401.54 385 402.27 C387.67 403.00 390.33 403.74 393 404.49 C395.67 405.24 398.33 406.01 401 406.79 C403.67 407.57 406.33 408.37 409 409.18 C411.67 409.99 414.33 410.82 417 411.66 C419.67 412.50 422.33 413.36 425 414.23 C427.67 415.10 430.33 415.98 433 416.89 C435.67 417.80 438.33 418.73 441 419.67 C443.67 420.62 446.33 421.57 449 422.56 C451.67 423.55 454.33 424.56 457 425.6 C459.67 426.64 462.33 427.70 465 428.79 C467.67 429.88 470.33 431.01 473 432.17 C475.67 433.33 478.33 434.51 481 435.74 C483.67 436.97 486.33 438.22 489 439.52 C491.67 440.82 494.33 442.17 497 443.53 C499.67 444.89 502.33 446.29 505 447.7 C507.67 449.11 510.33 450.55 513 451.98 C515.67 453.41 518.33 454.87 521 456.3 C523.67 457.73 526.33 459.17 529 460.54 C531.67 461.91 534.33 463.27 537 464.51 C539.67 465.75 542.33 466.93 545 467.98 C547.67 469.03 550.33 469.96 553 470.8 C555.67 471.64 558.33 472.36 561 473.03 C563.67 473.69 566.33 474.26 569 474.79 C571.67 475.32 574.33 475.76 577 476.19 C579.67 476.62 582.33 476.99 585 477.36 C587.67 477.73 590.33 478.07 593 478.41 C595.67 478.75 598.33 479.09 601 479.42 C603.67 479.75 606.33 480.08 609 480.4 C611.67 480.72 614.33 481.04 617 481.36 C619.67 481.68 622.33 481.99 625 482.3 C627.67 482.61 630.33 482.93 633 483.24 C635.67 483.56 638.33 483.87 641 484.19 C643.67 484.51 646.33 484.83 649 485.15 C651.67 485.47 654.33 485.80 657 486.12 C659.67 486.44 662.33 486.76 665 487.05 C667.67 487.34 670.33 487.61 673 487.85 C675.67 488.09 678.33 488.31 681 488.47 C683.67 488.63 686.33 488.75 689 488.84 C691.67 488.92 694.33 488.96 697 488.98 C699.67 489.00 702.33 488.98 705 488.94 C707.67 488.90 710.33 488.83 713 488.74 C715.67 488.65 718.33 488.54 721 488.41 C723.67 488.29 726.50 488.13 729 487.99 C731.50 487.85 734.83 487.65 736 487.58" stroke="#e80000"/>
<path d="M161 469.0 C163.50 469.35 171.00 470.37 176 471.07 C181.00 471.77 186.00 472.47 191 473.18 C196.00 473.89 201.00 474.60 206 475.31 C211.00 476.02 216.00 476.73 221 477.43 C226.00 478.13 231.00 478.83 236 479.51 C241.00 480.19 246.00 480.87 251 481.52 C256.00 482.17 261.00 482.82 266 483.44 C271.00 484.06 276.00 484.66 281 485.23 C286.00 485.80 291.00 486.36 296 486.88 C301.00 487.40 306.00 487.89 311 488.35 C316.00 488.81 321.00 489.24 326 489.63 C331.00 490.02 336.00 490.38 341 490.71 C346.00 491.04 351.00 491.33 356 491.59 C361.00 491.85 366.00 492.07 371 492.27 C376.00 492.46 381.00 492.63 386 492.76 C391.00 492.89 396.00 492.99 401 493.05 C406.00 493.12 411.00 493.15 416 493.15 C421.00 493.15 426.00 493.12 431 493.06 C436.00 493.00 441.00 492.91 446 492.79 C451.00 492.67 456.00 492.51 461 492.32 C466.00 492.13 471.00 491.91 476 491.67 C481.00 491.43 486.00 491.16 491 490.87 C496.00 490.58 501.00 490.27 506 489.96 C511.00 489.65 516.00 489.31 521 488.99 C526.00 488.67 531.00 488.33 536 488.01 C541.00 487.69 546.00 487.36 551 487.05 C556.00 486.74 561.00 486.44 566 486.14 C571.00 485.84 576.00 485.55 581 485.26 C586.00 484.97 591.00 484.69 596 484.41 C601.00 484.13 606.00 483.85 611 483.57 C616.00 483.29 621.00 483.01 626 482.73 C631.00 482.45 636.00 482.16 641 481.86 C646.00 481.56 651.00 481.26 656 480.94 C661.00 480.62 666.00 480.28 671 479.92 C676.00 479.56 681.00 479.19 686 478.79 C691.00 478.39 696.00 477.96 701 477.5 C706.00 477.04 711.00 476.56 716 476.04 C721.00 475.52 727.67 474.73 731 474.35 C734.33 473.97 735.17 473.84 736 473.74" stroke="#087808"/>
<path d="M161 372.7 C164.17 371.04 173.50 366.34 180 362.75 C186.50 359.16 193.33 355.05 200 351.17 C206.67 347.29 213.33 343.41 220 339.49 C226.67 335.57 233.33 331.64 240 327.67 C246.67 323.70 253.33 319.71 260 315.68 C266.67 311.65 273.33 307.59 280 303.48 C286.67 299.37 293.33 295.23 300 291.04 C306.67 286.85 313.33 282.63 320 278.34 C326.67 274.05 333.33 269.72 340 265.32 C346.67 260.92 353.33 256.48 360 251.96 C366.67 247.44 373.33 242.88 380 238.23 C386.67 233.58 394.17 228.26 400 224.09 C405.83 219.92 408.33 218.55 415 213.2 C421.67 207.85 432.50 198.28 440 192 C447.50 185.72 455.83 178.83 460 175.5 C464.17 172.17 463.33 173.00 465 172 C466.67 171.00 468.33 170.25 470 169.5 C471.67 168.75 473.33 168.03 475 167.5 C476.67 166.97 478.33 166.42 480 166.3 C481.67 166.18 483.33 166.45 485 166.8 C486.67 167.15 488.33 167.73 490 168.4 C491.67 169.07 493.33 169.95 495 170.8 C496.67 171.65 497.50 171.97 500 173.5 C502.50 175.03 506.67 177.83 510 180 C513.33 182.17 516.67 184.50 520 186.5 C523.33 188.50 526.67 190.25 530 192 C533.33 193.75 536.67 195.70 540 197 C543.33 198.30 546.67 198.93 550 199.8 C553.33 200.67 556.67 201.57 560 202.2 C563.33 202.83 566.67 202.90 570 203.6 C573.33 204.30 576.67 205.37 580 206.4 C583.33 207.43 586.67 208.47 590 209.8 C593.33 211.13 596.67 212.58 600 214.4 C603.33 216.22 606.67 218.23 610 220.7 C613.33 223.17 616.67 226.07 620 229.2 C623.33 232.33 626.50 235.67 630 239.5 C633.50 243.33 637.67 247.73 641 252.2 C644.33 256.67 646.83 261.60 650 266.3 C653.17 271.00 656.67 275.13 660 280.4 C663.33 285.67 666.67 292.07 670 297.9 C673.33 303.73 676.67 309.38 680 315.4 C683.33 321.42 686.50 327.07 690 334 C693.50 340.93 697.67 350.43 701 357 C704.33 363.57 706.83 367.60 710 373.4 C713.17 379.20 716.67 385.53 720 391.8 C723.33 398.07 727.33 405.53 730 411 C732.67 416.47 735.00 422.33 736 424.6" stroke="#e800e8"/>
</g>
<rect x="161.5" y="162.5" width="575" height="351" fill="none" stroke="#000" stroke-width="1"/>
</svg>
<div style="position:absolute;left:137px;top:146px;font:normal 11px/11px 'Liberation Sans',sans-serif;letter-spacing:-0.25px;color:#b81818;white-space:nowrap;transform:scaleX(0.9630);transform-origin:left top;">SWR</div>
<div style="position:absolute;left:158px;top:162px;font:normal 11px/11px 'Liberation Sans',sans-serif;letter-spacing:-0.25px;color:#b81818;white-space:nowrap;transform:translateX(-100%) ;transform-origin:right top;">10</div>
<div style="position:absolute;left:158px;top:264px;font:normal 11px/11px 'Liberation Sans',sans-serif;letter-spacing:-0.25px;color:#b81818;white-space:nowrap;transform:translateX(-100%) ;transform-origin:right top;">5</div>
<div style="position:absolute;left:158px;top:342px;font:normal 11px/11px 'Liberation Sans',sans-serif;letter-spacing:-0.25px;color:#b81818;white-space:nowrap;transform:translateX(-100%) ;transform-origin:right top;">3</div>
<div style="position:absolute;left:158px;top:404px;font:normal 11px/11px 'Liberation Sans',sans-serif;letter-spacing:-0.25px;color:#b81818;white-space:nowrap;transform:translateX(-100%) ;transform-origin:right top;">2</div>
<div style="position:absolute;left:158px;top:447px;font:normal 11px/11px 'Liberation Sans',sans-serif;letter-spacing:-0.25px;color:#b81818;white-space:nowrap;transform:translateX(-100%) ;transform-origin:right top;">1.5</div>
<div style="position:absolute;left:158px;top:504px;font:normal 11px/11px 'Liberation Sans',sans-serif;letter-spacing:-0.25px;color:#b81818;white-space:nowrap;transform:translateX(-100%) ;transform-origin:right top;">1</div>
<div style="position:absolute;left:163px;top:518px;font:normal 11px/11px 'Liberation Sans',sans-serif;letter-spacing:-0.25px;color:#000;white-space:nowrap;transform:translateX(-50%) scaleX(1.0041);transform-origin:center top;">49.900Mhz</div>
<div style="position:absolute;left:258.75px;top:518px;font:normal 11px/11px 'Liberation Sans',sans-serif;letter-spacing:-0.25px;color:#000;white-space:nowrap;transform:translateX(-50%) scaleX(1.0041);transform-origin:center top;">50.253Mhz</div>
<div style="position:absolute;left:353.8px;top:518px;font:normal 11px/11px 'Liberation Sans',sans-serif;letter-spacing:-0.25px;color:#000;white-space:nowrap;transform:translateX(-50%) scaleX(1.0041);transform-origin:center top;">50.601Mhz</div>
<div style="position:absolute;left:450px;top:518px;font:normal 11px/11px 'Liberation Sans',sans-serif;letter-spacing:-0.25px;color:#000;white-space:nowrap;transform:translateX(-50%) scaleX(1.0041);transform-origin:center top;">50.950Mhz</div>
<div style="position:absolute;left:545.8px;top:518px;font:normal 11px/11px 'Liberation Sans',sans-serif;letter-spacing:-0.25px;color:#000;white-space:nowrap;transform:translateX(-50%) scaleX(1.0041);transform-origin:center top;">51.303Mhz</div>
<div style="position:absolute;left:641px;top:518px;font:normal 11px/11px 'Liberation Sans',sans-serif;letter-spacing:-0.25px;color:#000;white-space:nowrap;transform:translateX(-50%) scaleX(1.0041);transform-origin:center top;">51.656Mhz</div>
<div style="position:absolute;left:733.2px;top:518px;font:normal 11px/11px 'Liberation Sans',sans-serif;letter-spacing:-0.25px;color:#000;white-space:nowrap;transform:translateX(-50%) scaleX(1.0041);transform-origin:center top;">52.000Mhz</div>
<div style="position:absolute;left:386.5px;top:146px;font:normal 11px/11px 'Liberation Sans',sans-serif;letter-spacing:-0.25px;color:#000;white-space:nowrap;transform:scaleX(1.0067);transform-origin:left top;">Legenda :</div>
<div style="position:absolute;left:461.5px;top:146px;font:normal 11px/11px 'Liberation Sans',sans-serif;letter-spacing:-0.25px;color:#b81818;white-space:nowrap;transform:scaleX(0.9831);transform-origin:left top;">SWR</div>
<div style="position:absolute;left:492px;top:146px;font:normal 11px/11px 'Liberation Sans',sans-serif;letter-spacing:-0.25px;color:#207a30;white-space:nowrap;transform:scaleX(0.9250);transform-origin:left top;">| Z |</div>
<div style="position:absolute;left:516.5px;top:146px;font:normal 11px/11px 'Liberation Sans',sans-serif;letter-spacing:-0.25px;color:#1a1a90;white-space:nowrap;transform:scaleX(0.9381);transform-origin:left top;">R.L.</div>
<div style="position:absolute;left:542px;top:146px;font:normal 11px/11px 'Liberation Sans',sans-serif;letter-spacing:-0.25px;color:#d030d0;white-space:nowrap;transform:scaleX(0.9682);transform-origin:left top;">Phase</div>
<div style="position:absolute;left:576.5px;top:146px;font:normal 11px/11px 'Liberation Sans',sans-serif;letter-spacing:-0.25px;color:#808080;white-space:nowrap;transform:scaleX(0.9650);transform-origin:left top;">Rs</div>
<div style="position:absolute;left:596.5px;top:146px;font:normal 11px/11px 'Liberation Sans',sans-serif;letter-spacing:-0.25px;color:#208080;white-space:nowrap;transform:scaleX(0.9278);transform-origin:left top;">| Xs |</div>
<div style="position:absolute;left:626.5px;top:146px;font:normal 11px/11px 'Liberation Sans',sans-serif;letter-spacing:-0.25px;color:#909090;white-space:nowrap;transform:scaleX(0.9918);transform-origin:left top;">(X,R,Z = Ohms.)</div>
<div style="position:absolute;left:736.5px;top:146px;font:normal 11px/11px 'Liberation Sans',sans-serif;letter-spacing:-0.25px;color:#b828b8;white-space:nowrap;transform:scaleX(1.1417);transform-origin:left top;">Ph.</div>
<div style="position:absolute;left:776px;top:146px;font:normal 11px/11px 'Liberation Sans',sans-serif;letter-spacing:-0.25px;color:#808080;white-space:nowrap;transform:scaleX(1.0795);transform-origin:left top;">Z</div>
<div style="position:absolute;left:738px;top:162px;font:normal 11px/11px 'Liberation Sans',sans-serif;letter-spacing:-0.25px;color:#b828b8;white-space:nowrap;">180°</div>
<div style="position:absolute;left:762px;top:162px;font:normal 11px/11px 'Liberation Sans',sans-serif;letter-spacing:-0.25px;color:#808080;white-space:nowrap;">500</div>
<div style="position:absolute;left:738px;top:247px;font:normal 11px/11px 'Liberation Sans',sans-serif;letter-spacing:-0.25px;color:#b828b8;white-space:nowrap;">135°</div>
<div style="position:absolute;left:762px;top:247px;font:normal 11px/11px 'Liberation Sans',sans-serif;letter-spacing:-0.25px;color:#808080;white-space:nowrap;">375</div>
<div style="position:absolute;left:738px;top:334px;font:normal 11px/11px 'Liberation Sans',sans-serif;letter-spacing:-0.25px;color:#b828b8;white-space:nowrap;">90°</div>
<div style="position:absolute;left:762px;top:334px;font:normal 11px/11px 'Liberation Sans',sans-serif;letter-spacing:-0.25px;color:#808080;white-space:nowrap;">250</div>
<div style="position:absolute;left:738px;top:421px;font:normal 11px/11px 'Liberation Sans',sans-serif;letter-spacing:-0.25px;color:#b828b8;white-space:nowrap;">45°</div>
<div style="position:absolute;left:762px;top:421px;font:normal 11px/11px 'Liberation Sans',sans-serif;letter-spacing:-0.25px;color:#808080;white-space:nowrap;">125</div>
<div style="position:absolute;left:739px;top:504px;font:normal 11px/11px 'Liberation Sans',sans-serif;letter-spacing:-0.25px;color:#b828b8;white-space:nowrap;">0°</div>
<div style="position:absolute;left:762px;top:474px;font:normal 11px/11px 'Liberation Sans',sans-serif;letter-spacing:-0.25px;color:#808080;white-space:nowrap;">50</div>
<div style="position:absolute;left:762px;top:504px;font:normal 11px/11px 'Liberation Sans',sans-serif;letter-spacing:-0.25px;color:#808080;white-space:nowrap;">0k</div>
<div style="position:absolute;left:598.5px;top:166px;font:normal 11px/11px 'Liberation Sans',sans-serif;letter-spacing:-0.25px;color:#107010;white-space:nowrap;transform:translateX(-100%) scaleX(1.0148);transform-origin:right top;">M2</div>
<div style="position:absolute;left:699px;top:166px;font:normal 11px/11px 'Liberation Sans',sans-serif;letter-spacing:-0.25px;color:#30d030;white-space:nowrap;transform:translateX(-100%) scaleX(0.9831);transform-origin:right top;">SWR</div>
<div style="position:absolute;left:699px;top:178px;font:normal 11px/11px 'Liberation Sans',sans-serif;letter-spacing:-0.25px;color:#30d030;white-space:nowrap;transform:translateX(-100%) scaleX(0.9910);transform-origin:right top;">Mini</div>
<div style="position:absolute;left:222px;top:166px;width:1px;height:1px;background:#000;"></div>
<div style="position:absolute;left:228px;top:166px;width:1px;height:1px;background:#000;"></div>
<div style="position:absolute;left:233px;top:166px;width:1px;height:1px;background:#000;"></div>
<div style="position:absolute;left:174px;top:167px;width:286px;height:39px;background:#00ff00;"></div>
<div style="position:absolute;left:181px;top:172px;font:normal 32px/32px 'Liberation Sans',sans-serif;letter-spacing:0px;color:#000;white-space:nowrap;transform:scaleX(0.9979);transform-origin:left top;-webkit-text-stroke:0.5px #000;">51 874 000 -&gt; 1.17</div>
</div></body></html>
